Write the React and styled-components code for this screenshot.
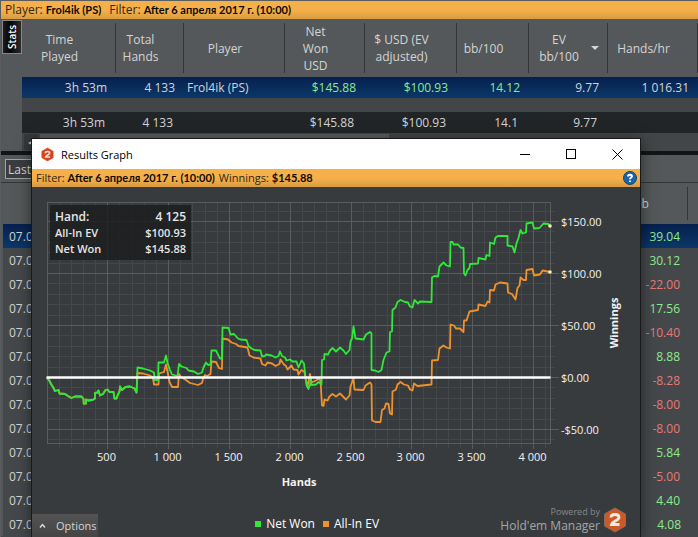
import React from 'react';
import styled, { createGlobalStyle } from 'styled-components';

const GlobalStyle = createGlobalStyle`
	* {
		box-sizing: border-box;
	}
	body {
		margin: 0;
		overflow: hidden;
		background: #45484a;
		color: #d4d4d4;
		font-family: 'Open Sans', 'Noto Sans', sans-serif;
		font-size: 12px;
		line-height: 17px;
	}
	button {
		font: inherit;
		color: inherit;
		border: none;
		padding: 0;
	}
`;

const Page = styled.div`
	position: relative;
	min-height: 100vh;
	overflow: hidden;
	border-top: 1px solid #5a5d5f;
	border-left: 1px solid #5a5d5f;
`;
const FilterBar = styled.div`
	height: 18px;
	padding: 0 4px;
	background: linear-gradient(#f6b04a 50%, #d99c40);
	color: #2e2718;
	font-size: ${({ $size }) => $size}px;
	line-height: 18px;
	white-space: nowrap;
	display: flex;
	gap: ${({ $gap }) => $gap}px;

	b {
		color: #0c0a06;
		font-family: Lato, 'Noto Sans', sans-serif;
		font-size: 11px;
		font-weight: 700;
	}
`;
const StatsPanel = styled.section`
	display: flex;
	background: #55585a;
`;
const TabColumn = styled.div`
	flex: 0 0 21px;
	padding: 1px 0 0 1px;
`;
const StatsTab = styled.button`
	width: 20px;
	height: 34px;
	border: 1px solid #85888a;
	background: linear-gradient(90deg, #2c2c2c, #050505 60%, #1c1c1c);
	color: #fff;
	font-size: 10px;
	font-weight: 600;
	writing-mode: vertical-rl;
	transform: rotate(180deg);
`;
const StatsContent = styled.div`
	flex: 1;
	min-width: 0;
	background: #434648;
`;
const Table = styled.table`
	width: 100%;
	table-layout: fixed;
	border-collapse: collapse;
`;
const HeadCell = styled.th`
	height: ${({ $height }) => $height}px;
	padding: 4px 0;
	background: #55585a;
	font-weight: 400;

	div {
		position: relative;
		display: flex;
		align-items: center;
		justify-content: center;
		height: ${({ $height }) => $height - 8}px;
		padding-right: ${({ $pad = 18 }) => $pad}px;
		border-right: 1px solid #333638;
	}
	svg {
		position: absolute;
		right: 8px;
	}
`;
const StatRow = styled.tr`
	height: 21px;
	background: ${({ $total }) => ($total ? '#222527' : 'linear-gradient(#06204f, #0b3868)')};

	td {
		padding: 0 ${({ $total }) => ($total ? 11 : 9)}px 0 3px;
		text-align: right;
		white-space: nowrap;
	}
	td:nth-child(3) {
		text-align: left;
	}
`;
const SpacerRow = styled.tr`
	height: 14px;
`;
const Value = styled.span`
	color: ${({ $tone }) => ({ win: '#8ceb8c', loss: '#e87878' })[$tone] || 'inherit'};
`;
const ScrollTrack = styled.div`
	display: flex;
	gap: 2px;
	height: 18px;
	padding: 1px 2px;
`;
const ScrollArrow = styled.button`
	width: 14px;
	background: #37393b;
	color: #ccc;
	font-size: 8px;
	line-height: 14px;
`;
const ScrollThumb = styled.div`
	width: 52%;
	background: #5b5e60;
`;
const Divider = styled.div`
	height: 4px;
	background: #121415;
`;
const Toolbar = styled.div`
	height: 28px;
	padding: 4px;
	background: #55585a;
	border-bottom: 1px solid #333638;
`;
const RangeButton = styled.button`
	width: 80px;
	height: 20px;
	padding: 0 2px;
	border: 1px solid #a0a2a3;
	background: #3b3e40;
	text-align: left;
`;
const HandTable = styled(Table)`
	border-left: 2px solid #55585a;
`;
const HandRow = styled.tr`
	height: 24px;
	background: ${({ $selected }) => ($selected ? 'linear-gradient(#06204f, #0b3868)' : 'transparent')};

	td {
		padding: 0 8px 0 6px;
		text-align: right;
	}
	td:first-child {
		text-align: left;
	}
`;

const Dialog = styled.section`
	position: absolute;
	top: 137px;
	right: 57px;
	bottom: 0;
	left: 30px;
	display: flex;
	flex-direction: column;
	border: 1px solid #17191a;
	border-bottom: none;
	background: #383b3e;
	box-shadow: 0 2px 14px rgba(0, 0, 0, 0.5);
`;
const TitleBar = styled.header`
	display: flex;
	align-items: center;
	height: 30px;
	padding-left: 9px;
	background: #fff;
	color: #000;

	h1 {
		flex: 1;
		margin: 0 0 0 7px;
		font-size: 11px;
		font-weight: 400;
	}
`;
const WindowButton = styled.button`
	display: grid;
	place-items: center;
	width: 46px;
	height: 30px;
	background: none;
`;
const HelpButton = styled.button`
	display: grid;
	width: 14px;
	height: 18px;
	place-items: center;
	margin: 0 -1px 0 auto;
	background: none;
`;
const ChartArea = styled.div`
	position: relative;

	> svg {
		display: block;
		width: 100%;
		height: auto;
	}
`;
const HandInfo = styled.dl`
	position: absolute;
	top: 18px;
	left: 18px;
	display: grid;
	grid-template-columns: auto auto;
	justify-content: space-between;
	width: 141px;
	height: 55px;
	margin: 0;
	padding: 3px 5px;
	background: rgba(28, 29, 31, 0.85);
	color: #e6e6e6;
	font-size: 11px;
	font-weight: 600;
	line-height: 16px;

	dd {
		margin: 0;
		text-align: right;
	}
	dt:first-child,
	dt:first-child + dd {
		font-size: 12px;
		line-height: 17px;
	}
`;
const Footer = styled.footer`
	display: flex;
	align-items: flex-end;
	margin-top: auto;
`;
const OptionsButton = styled.button`
	display: flex;
	align-items: center;
	gap: 10px;
	width: 66px;
	height: 23px;
	padding-left: 7px;
	background: linear-gradient(#535353, #444);
	font-size: 11px;
`;
const Legend = styled.ul`
	display: flex;
	gap: 8px;
	flex: 1;
	justify-content: center;
	height: 23px;
	margin: 0;
	padding: 0 0 0 36px;
	color: #fff;
	font-size: 12px;
	list-style: none;

	li {
		display: flex;
		align-items: center;
		height: 19px;
		gap: 5px;
	}
`;
const Swatch = styled.span`
	width: 6px;
	height: 6px;
	background: ${({ $color }) => $color};
`;
const Brand = styled.div`
	display: flex;
	align-items: center;
	gap: 3px;
	height: 34px;
	padding-right: 13px;
	color: #a4a6a8;
	font-size: 12px;
	line-height: 16px;
	text-align: right;

	small {
		display: block;
		color: #85888a;
		font-size: 9px;
		line-height: 12px;
	}
`;

const columns = [
	{ label: ['Time', 'Played'], width: 94 },
	{ label: ['Total', 'Hands'], width: 68 },
	{ label: ['Player'], width: 101 },
	{ label: ['Net', 'Won', 'USD'], width: 80 },
	{ label: ['$ USD (EV', 'adjusted)'], width: 92 },
	{ label: ['bb/100'], width: 72 },
	{ label: ['EV', 'bb/100'], width: 79, sorted: true },
	{ label: ['Hands/hr'] },
];
const playerStats = ['3h 53m', '4 133', 'Frol4ik (PS)', '$145.88', '$100.93', '14.12', '9.77', '1 016.31'];
const totalStats = ['3h 53m', '4 133', '', '$145.88', '$100.93', '14.1', '9.77', ''];
const hands = ['39.04', '30.12', '-22.00', '17.56', '-10.40', '8.88', '-8.28', '-8.00', '-8.00', '5.84', '-5.00', '4.40', '4.08'];

const GREEN = '#2fe83a';
const ORANGE = '#f0922c';

// plot geometry, in chart units
const LEFT = 47.5;
const RIGHT = 550.5;
const TOP = 202.5;
const BOTTOM = 443.5;
const xOf = (hand) => Math.round(46.5 + hand * 0.1216) + 0.5;
const yOf = (usd) => Math.round(377 - usd * 1.04) + 0.5;

const opening =
	'47,378 49,380 51,384 53,387 55,391 58.5,390 59.5,393.5 65,394 68,396 71.5,398 75,396.5 81.5,396.5 83.5,399 83.7,403.5 86,403.5 86,399.5 88,400.5 92.5,400 95,398.5 95,393 97.5,392.5 98.5,390.5 100,395.5 103,394 105.5,390 107.5,389.5 109.5,392 113.5,392 114.5,398.5 116.5,398.5 117.5,395.5 119.5,391.5 120,386.5 122,390 125.5,387 130,386.5 134.5,388.5 136.5,392.5 ';
const netWon =
	opening +
	'137.5,367.5 143,368.5 150,370.5 154,372.5 154.5,380 158,380 158.5,362.5 164,362.5 166,355.5 167.5,363 170,370 172,374.5 177.5,376 179,364 181.5,366.5 186.5,368 188.5,370.5 194,371.5 198,374 202,372.5 203.5,367.5 206,362.5 208,365 210.5,364.5 211.5,350.5 216,350.5 218,354.5 220,358.5 222,358.5 222.5,327.5 228.5,328 230.5,334.5 234,334 238,338.5 240.5,339.5 246.5,340 248.5,346 251.5,348.5 254.5,350 260.5,350.5 262,356.5 265,356 266,354.5 271.5,355.5 275.5,357.5 278.5,356 280,351.5 282,356 285,357.5 286.5,360.5 290,359.5 292.5,361.5 296.5,361.5 298.5,367.5 301.5,360.5 304,363.5 305.5,377.5 306.5,385 308.5,389 310,385 310.5,378 311.5,385 316,384.5 318.5,382 321.5,384.5 322,360 324,359.5 324.5,354 328,354.5 330,350.5 332.5,348 336,351.5 340,347.5 343.5,350.5 346,354 349.5,350 350.5,341.5 352,338.5 353.5,326.5 355.5,338.5 363.5,339.5 366,334.5 370,332 371.5,333.5 371.5,370 375,370.5 378.5,372 381.5,370 383.5,360 386.5,352.5 389.5,351.5 390,332 392,331.5 392.5,310 395.5,307.5 397.5,302 400.5,300 405,302 408,302.5 410,306.5 412.5,307.5 414.5,300 418,303.5 420,301.5 431.5,302 432,277.5 434.5,276 438,276.5 439.5,266.5 443.5,262.5 446.5,265.5 450,266.5 450.5,242 452.5,242 453.5,244.5 458,244.5 460.5,247.5 463.5,248 464,273.5 465.5,275.5 467.5,270 469.5,268 470,264 478,263.5 478.5,258 485.5,259.5 486.5,255 489.5,256 490,242.5 494,244 495.5,237.5 498,236 507.5,236 507.5,245.5 512.5,246.5 514.5,252.5 516.5,243.5 518.5,238 520.5,230 522.5,233.5 526,232.5 526.5,223.5 532.5,222.5 534,228.5 539.5,228 543.5,223.5 548.5,224 550,226';
const allInEv =
	opening +
	'137.5,373 143,373.5 150,375.5 153,378 154,384.5 158.5,384.5 159,373.5 164,372 166,364.5 168,374 169.5,382 172,387 178,387 178.5,380 179,374 181,377 186,380 190,383 198,385 202,383 203,379 205,375 207,376 210.5,374 211.5,361.5 216,362 219,368 222,369 222.5,338.5 228,339.5 231.5,342.5 236,344 238.5,346 247.5,347.5 249.5,355.5 253.5,357.5 260.5,358.5 262,364 265.5,365.5 267.5,362.5 272,363.5 275.5,366 279.5,364 280.5,359.5 283.5,364 286,366 287.5,369.5 291.5,365.5 293.5,369.5 297.5,370 298.5,374.5 301.5,370 304.5,372 305.5,378.5 307.5,386.5 310,374 311.5,382.5 316,380.5 318.5,378.5 320.5,380.5 322,405.5 323.5,406 324.5,399.5 327.5,400.5 329.5,396.5 332.5,394 336,396.5 340,393.5 342.5,396 346,399.5 349.5,395.5 350.5,386.5 353.5,378.5 354.5,389.5 363.5,390 365.5,385.5 370,382.5 371.5,384.5 372,420.5 375.5,422 380.5,422 382,410 384.5,408.5 386,403.5 388.5,404 390,413.5 392,414.5 392.5,391.5 396,389.5 397.5,384.5 400.5,382 404,384.5 408,385.5 410,389.5 412.5,390.5 414,383.5 417.5,386 431.5,384.5 432,360.5 438,360 439.5,348.5 443.5,345.5 446.5,347.5 450,348.5 450.5,324.5 454,325.5 456,328.5 460,328.5 463.5,332 464,320.5 466.5,320.5 469.5,311.5 478,310 478.5,304.5 485.5,306 487.5,301.5 489.5,302.5 490,290 494,290.5 495.5,284.5 500,282.5 507.5,283.5 508,292.5 512,294 515.5,299.5 517.5,288 519.5,285.5 520.5,277.5 523.5,280 526,280 526.5,270 532.5,269 534,275.5 540,274.5 542.5,270.5 550,272';

const range = (from, to, step) => {
	const out = [];
	for (let v = from; v <= to; v += step) out.push(v);
	return out;
};
const formatHands = (n) => (n < 1000 ? `${n}` : `${Math.floor(n / 1000)} ${String(n % 1000).padStart(3, '0')}`);
const formatUsd = (n) => `${n < 0 ? '-' : ''}$${Math.abs(n)}.00`;

const HexLogo = ({ size, color, edge }) => (
	<svg width={size} height={size + 2} viewBox='0 0 24 26' aria-hidden='true'>
		<path d='M12 1 22.5 7v12L12 25 1.500 19V7z' fill={color} stroke={edge} strokeWidth='1' />
		<path
			d='M8 10.500C8 6.500 16 6.500 16 10.500 16 13.500 9.500 14 8.500 17.500H16.500'
			fill='none'
			stroke='#f1e8e2'
			strokeWidth='2.800'
		/>
	</svg>
);

const ResultsChart = () => (
	<svg viewBox='32 187 608 310' fontSize='11' fill='#f2f2f2' role='img' aria-label='Winnings by hands'>
		<g shapeRendering='crispEdges' fill='none'>
			<g stroke='#44484b'>
				{range(100, 4100, 100).map((n) => (
					<path key={n} d={`M${xOf(n)} ${TOP}V${BOTTOM + 4}`} />
				))}
				{range(-60, 160, 10).map((n) => (
					<path key={n} d={`M${LEFT} ${yOf(n)}H${RIGHT + 4}`} />
				))}
			</g>
			<g stroke='#595d60'>
				{range(500, 4000, 500).map((n) => (
					<path key={n} d={`M${xOf(n)} ${TOP}V${BOTTOM + 5}`} />
				))}
				{range(-50, 150, 50).map((n) => (
					<path key={n} d={`M${LEFT} ${yOf(n)}H${RIGHT + 8}`} />
				))}
				<rect x={LEFT} y={TOP} width={RIGHT - LEFT} height={BOTTOM - TOP} />
			</g>
		</g>
		<g fill='none' strokeWidth='1.800' strokeLinejoin='round'>
			<polyline points={allInEv} stroke={ORANGE} />
			<polyline points={netWon} stroke={GREEN} />
		</g>
		<path d={`M${LEFT - 1} 377.500H${RIGHT}`} stroke='#fff' strokeWidth='2.400' />
		<circle cx='550' cy='226' r='1.800' fill='#ffe9b8' />
		<circle cx='550' cy='272' r='1.800' fill='#ffe9b8' />
		{range(500, 4000, 500).map((n) => (
			<text key={n} x={xOf(n) - 1} y='461' textAnchor='middle'>
				{formatHands(n)}
			</text>
		))}
		{range(-50, 150, 50).map((n) => (
			<text key={n} x='561' y={yOf(n) + 4}>
				{formatUsd(n)}
			</text>
		))}
		<text x='299' y='486' textAnchor='middle' fontWeight='700'>
			Hands
		</text>
		<text transform='translate(618 323) rotate(-90)' textAnchor='middle' fontWeight='700'>
			Winnings
		</text>
	</svg>
);

const ResultsDialog = () => (
	<Dialog role='dialog' aria-label='Results Graph'>
		<TitleBar>
			<HexLogo size={13} color='#d8431f' edge='#d8431f' />
			<h1>Results Graph</h1>
			<WindowButton aria-label='Minimize'>
				<svg width='11' height='11' stroke='#000' shapeRendering='crispEdges'>
					<path d='M0 5.500H10' />
				</svg>
			</WindowButton>
			<WindowButton aria-label='Maximize'>
				<svg width='11' height='11' stroke='#000' fill='none' shapeRendering='crispEdges'>
					<rect x='.5' y='.5' width='9' height='9' />
				</svg>
			</WindowButton>
			<WindowButton aria-label='Close'>
				<svg width='11' height='11' stroke='#000'>
					<path d='M.5 .5 10.500 10.500M10.500 .5 .5 10.500' />
				</svg>
			</WindowButton>
		</TitleBar>
		<FilterBar $size={11} $gap={4}>
			<span>
				Filter: <b>After 6 апреля 2017 г. (10:00)</b>
			</span>
			<span>
				Winnings: <b>$145.88</b>
			</span>
			<HelpButton aria-label='Help'>
				<svg width='14' height='14' viewBox='0 0 14 14'>
					<circle cx='7' cy='7' r='6.500' fill='#1a64ad' stroke='#0d4580' />
					<path d='M5 5.500C5 3.200 9 3.200 9 5.300 9 6.500 7 6.600 7 8.200M7 9.500V11' fill='none' stroke='#fff' strokeWidth='1.900' />
				</svg>
			</HelpButton>
		</FilterBar>
		<ChartArea>
			<ResultsChart />
			<HandInfo>
				<dt>Hand:</dt>
				<dd>4 125</dd>
				<dt>All-In EV</dt>
				<dd>$100.93</dd>
				<dt>Net Won</dt>
				<dd>$145.88</dd>
			</HandInfo>
		</ChartArea>
		<Footer>
			<OptionsButton>
				<svg width='7' height='5' fill='none' stroke='#ddd' strokeWidth='1.400'>
					<path d='M1 4.500 3.500 1.500 6 4.500' />
				</svg>
				Options
			</OptionsButton>
			<Legend>
				<li>
					<Swatch $color={GREEN} />
					Net Won
				</li>
				<li>
					<Swatch $color={ORANGE} />
					All-In EV
				</li>
			</Legend>
			<Brand>
				<span>
					<small>Powered by</small>
					Hold'em Manager
				</span>
				<HexLogo size={24} color='#cb5a26' edge='#8d6a58' />
			</Brand>
		</Footer>
	</Dialog>
);

const App = () => (
	<>
		<GlobalStyle />
		<Page>
			<FilterBar $size={12} $gap={8}>
				<span>
					Player: <b>Frol4ik (PS)</b>
				</span>
				<span>
					Filter: <b>After 6 апреля 2017 г. (10:00)</b>
				</span>
			</FilterBar>
			<StatsPanel>
				<TabColumn>
					<StatsTab>Stats</StatsTab>
				</TabColumn>
				<StatsContent>
					<Table>
						<colgroup>
							{columns.map((col) => (
								<col key={col.label.join(' ')} width={col.width} />
							))}
						</colgroup>
						<thead>
							<tr>
								{columns.map((col) => (
									<HeadCell key={col.label.join(' ')} $height={58}>
										<div>
											<span>
												{col.label.map((line, i) => (
													<React.Fragment key={line}>
														{i > 0 && <br />}
														{line}
													</React.Fragment>
												))}
											</span>
											{col.sorted && (
												<svg width='8' height='4' fill='#d4d4d4'>
													<path d='M0 0H8L4 4z' />
												</svg>
											)}
										</div>
									</HeadCell>
								))}
							</tr>
						</thead>
						<tbody>
							<StatRow>
								{playerStats.map((stat, i) => (
									<td key={i}>
										<Value $tone={i > 2 && i < 6 ? 'win' : undefined}>{stat}</Value>
									</td>
								))}
							</StatRow>
							<SpacerRow>
								<td colSpan={columns.length} />
							</SpacerRow>
							<StatRow $total>
								{totalStats.map((stat, i) => (
									<td key={i}>{stat}</td>
								))}
							</StatRow>
						</tbody>
					</Table>
					<ScrollTrack>
						<ScrollArrow aria-label='Scroll left'>◀</ScrollArrow>
						<ScrollThumb />
					</ScrollTrack>
				</StatsContent>
			</StatsPanel>
			<Divider />
			<Toolbar>
				<RangeButton>Last</RangeButton>
			</Toolbar>
			<HandTable>
				<colgroup>
					<col />
					<col width='80' />
					<col width='9' />
				</colgroup>
				<thead>
					<tr>
						<HeadCell $height={41} />
						<HeadCell $height={41} $pad={13}>
							<div>bb</div>
						</HeadCell>
						<HeadCell $height={41} />
					</tr>
				</thead>
				<tbody>
					{hands.map((won, i) => (
						<HandRow key={i} $selected={i === 0}>
							<td>07.0</td>
							<td>
								<Value $tone={won.startsWith('-') ? 'loss' : 'win'}>{won}</Value>
							</td>
							<td />
						</HandRow>
					))}
				</tbody>
			</HandTable>
			<ResultsDialog />
		</Page>
	</>
);

export default App;
